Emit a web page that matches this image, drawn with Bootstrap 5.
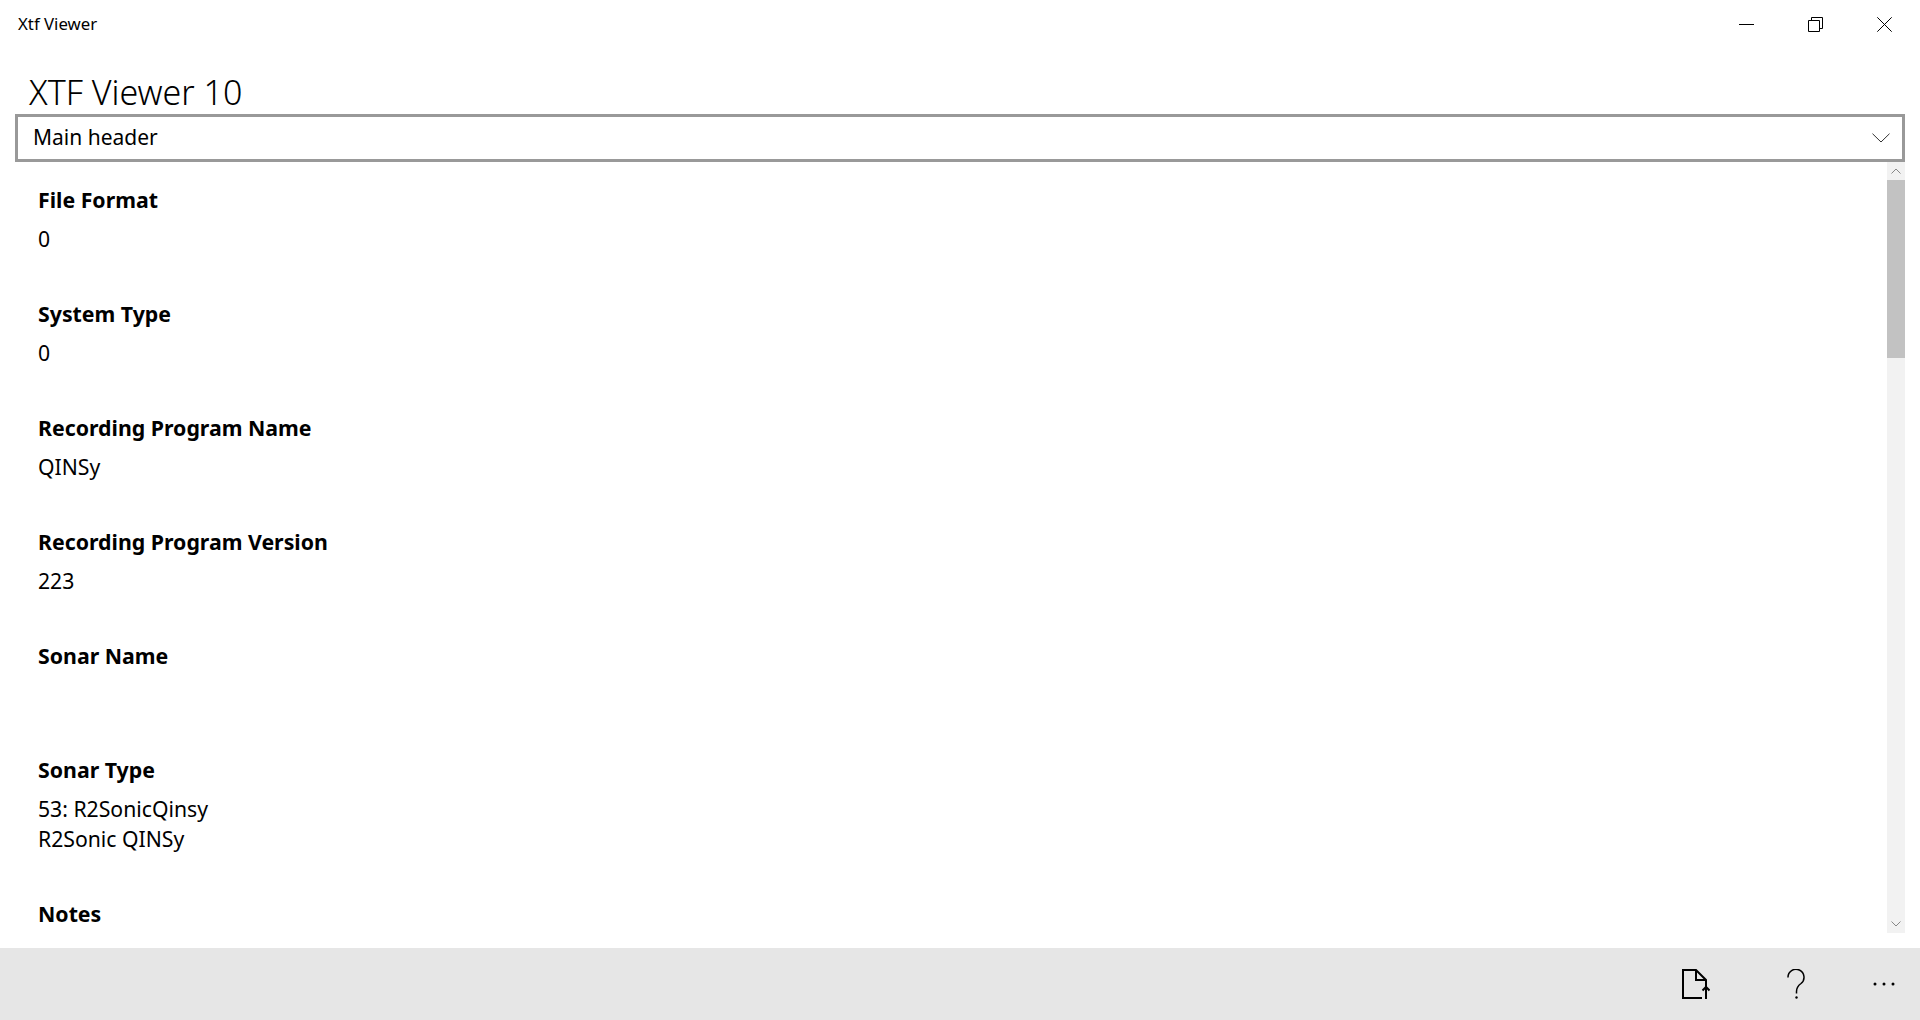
<!DOCTYPE html>
<html lang="en">
<head>
<meta charset="utf-8">
<title>Xtf Viewer</title>
<link rel="stylesheet" href="https://cdn.jsdelivr.net/npm/bootstrap@5.3.0/dist/css/bootstrap.min.css">
<style>
html,body{height:100%;overflow:hidden}
body{font-family:"Noto Sans","Open Sans",sans-serif;color:#000;background:#fff}
.app-shell{height:1020px}
.title-strip{height:48px;padding-left:18px;padding-right:1px;font-size:16.800px}
.win-btn{width:69px;height:48px;padding-top:1px}
.app-title{font-size:34px;font-weight:300;line-height:45px;padding:22px 0 0 29px;margin:0;box-sizing:content-box;height:44px}
.pick-box{height:48px;margin:0 15px;border:3px solid #999;padding:0 12px 0 15px;font-size:21px}
.scroll-zone{height:786px;min-height:0;padding-left:38px;padding-right:15px}
.field-list{overflow:hidden;height:786px}
.field-item{margin-bottom:45px}
.field-item:first-child{padding-top:23px}
.field-name{font-size:21.300px;font-weight:700;line-height:30px;margin-bottom:9px}
.field-val{font-size:21.200px;line-height:30px;min-height:30px}
.bar-track{width:18px;height:771px;background:#f2f2f2}
.bar-arrow{height:18px}
.bar-thumb{height:178px;background:#c2c2c2}
.foot-bar{height:72px;background:#e6e6e6}
.foot-btn{height:72px}
.foot-file{width:96px}
.foot-help{width:104px}
.foot-more{width:72px}
</style>
</head>
<body>
<div class="app-shell d-flex flex-column">
  <div class="title-strip d-flex align-items-center justify-content-between">
    <span>Xtf Viewer</span>
    <div class="d-flex">
      <div class="win-btn d-flex align-items-center justify-content-center"><svg width="15" height="15" viewBox="0 0 15 15"><path d="M0 7.500H15" stroke="#000" fill="none"/></svg></div>
      <div class="win-btn d-flex align-items-center justify-content-center"><svg width="15" height="15" viewBox="0 0 15 15"><path d="M.5 3.500h11v11H.5zM3.500 3.500V.5h11v11h-3" stroke="#000" fill="none"/></svg></div>
      <div class="win-btn d-flex align-items-center justify-content-center"><svg width="15" height="15" viewBox="0 0 15 15"><path d="M.3.3l14.400 14.400M14.700.3L.3 14.700" stroke="#000" fill="none"/></svg></div>
    </div>
  </div>
  <h1 class="app-title">XTF Viewer 10</h1>
  <div class="pick-box d-flex align-items-center justify-content-between">
    <span>Main header</span>
    <svg width="18" height="10" viewBox="0 0 18 10"><path d="M.5.700L9 9l8.500-8.300" stroke="#333" fill="none"/></svg>
  </div>
  <div class="scroll-zone d-flex justify-content-between">
    <div class="field-list flex-grow-1">
      <div class="field-item"><div class="field-name">File Format</div><div class="field-val">0</div></div>
      <div class="field-item"><div class="field-name">System Type</div><div class="field-val">0</div></div>
      <div class="field-item"><div class="field-name">Recording Program Name</div><div class="field-val">QINSy</div></div>
      <div class="field-item"><div class="field-name">Recording Program Version</div><div class="field-val">223</div></div>
      <div class="field-item"><div class="field-name">Sonar Name</div><div class="field-val"></div></div>
      <div class="field-item"><div class="field-name">Sonar Type</div><div class="field-val">53: R2SonicQinsy<br>R2Sonic QINSy</div></div>
      <div class="field-item"><div class="field-name">Notes</div><div class="field-val"></div></div>
    </div>
    <div class="bar-track d-flex flex-column">
      <div class="bar-arrow d-flex align-items-center justify-content-center"><svg width="10" height="6" viewBox="0 0 10 6"><path d="M.5 5.500L5 1l4.500 4.500" stroke="#888" fill="none"/></svg></div>
      <div class="bar-thumb"></div>
      <div class="flex-grow-1"></div>
      <div class="bar-arrow d-flex align-items-center justify-content-center"><svg width="10" height="6" viewBox="0 0 10 6"><path d="M.5.500L5 5l4.500-4.500" stroke="#888" fill="none"/></svg></div>
    </div>
  </div>
  <div class="foot-bar d-flex justify-content-end">
    <div class="foot-btn foot-file d-flex align-items-center justify-content-center"><svg width="28" height="30" viewBox="0 0 28 30"><path d="M24 18v-7L14 1H1v28h19" stroke="#000" stroke-width="2" fill="none"/><path d="M14 1v10h10" stroke="#000" stroke-width="2" fill="none"/><path d="M24 30V18M20.500 21.500L24 18l3.500 3.500" stroke="#000" stroke-width="2" fill="none"/></svg></div>
    <div class="foot-btn foot-help d-flex align-items-center justify-content-center"><svg width="18" height="30" viewBox="0 0 18 30"><path d="M1 8.500a8 8 0 1 1 13 6c-3 2.200-4.500 4-4.500 8v2" stroke="#000" stroke-width="1.500" fill="none"/><circle cx="9.500" cy="28.500" r="1.200"/></svg></div>
    <div class="foot-btn foot-more d-flex align-items-center justify-content-center"><svg width="22" height="4" viewBox="0 0 22 4"><circle cx="2" cy="2" r="1.500"/><circle cx="11" cy="2" r="1.500"/><circle cx="20" cy="2" r="1.500"/></svg></div>
  </div>
</div>
<script src="https://cdn.jsdelivr.net/npm/bootstrap@5.3.0/dist/js/bootstrap.bundle.min.js"></script>
</body>
</html>
